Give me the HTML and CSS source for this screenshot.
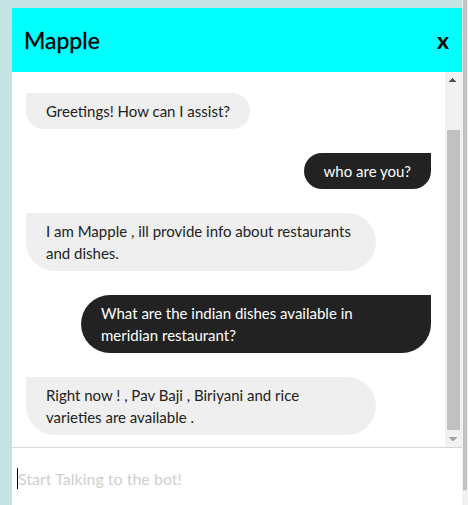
FILE: index.html
```html
<!DOCTYPE html>
<html lang="en">
<head>
<meta charset="utf-8">
<title>Mapple</title>
<link rel="stylesheet" href="styles.css">
</head>
<body>
<div class="page">
  <div class="stage">
    <section class="chat">
      <header class="chat-header">
        <h1 class="chat-title">Mapple</h1>
        <button class="chat-close" type="button">x</button>
      </header>
      <div class="messages">
        <div class="viewport">
          <div class="thread">
            <div class="bubble bot">Greetings! How can I assist?</div>
            <div class="bubble user">who are you?</div>
            <div class="bubble bot">I am Mapple , ill provide info about restaurants and dishes.</div>
            <div class="bubble user">What are the indian dishes available in meridian restaurant?</div>
            <div class="bubble bot">Right now ! , Pav Baji , Biriyani and rice varieties are available .</div>
          </div>
        </div>
        <div class="scrollbar">
          <div class="sb-btn sb-up"></div>
          <div class="sb-track"><div class="sb-thumb"></div></div>
          <div class="sb-btn sb-down"></div>
        </div>
      </div>
      <div class="composer">
        <span class="caret"></span>
        <input class="composer-input" type="text" placeholder="Start Talking to the bot!">
      </div>
    </section>
  </div>
  <div class="page-scroll"><div class="page-thumb"></div><div class="page-arrow"></div></div>
</div>
</body>
</html>
```
FILE: styles.css
```css
html, body {
  margin: 0;
  padding: 0;
}
body {
  background: #c4e3e3;
  font-family: Lato, "Noto Sans", sans-serif;
}
.page {
  display: flex;
  height: 505px;
  overflow: hidden;
}
.stage {
  flex: 1;
  padding: 8px 0 0 12px;
  min-width: 0;
}
.chat {
  background: #ffffff;
  display: flex;
  flex-direction: column;
  height: 504px;
}
.chat-header {
  height: 64px;
  flex: none;
  background: #00ffff;
  display: flex;
  align-items: center;
  justify-content: space-between;
  padding: 0 13px 0 12px;
}
.chat-title {
  margin: 0;
  font-size: 23px;
  font-weight: 400;
  color: #000;
  -webkit-text-stroke: 0.3px #000;
}
.chat-close {
  border: 0;
  background: transparent;
  font-family: Lato, "Noto Sans", sans-serif;
  font-size: 23px;
  font-weight: 700;
  color: #000;
  padding: 0;
  line-height: 1;
}
.messages {
  height: 375px;
  flex: none;
  display: flex;
  border-bottom: 1px solid #d6d6d6;
}
.viewport {
  flex: 1;
  min-width: 0;
  overflow: hidden;
  display: flex;
  flex-direction: column;
  justify-content: flex-end;
}
.thread {
  display: flex;
  flex-direction: column;
  gap: 24px;
  padding: 0 14px 12px 14px;
}
.bubble {
  max-width: 350px;
  box-sizing: border-box;
  padding: 7px 20px;
  font-size: 15px;
  line-height: 22px;
}
.bot {
  align-self: flex-start;
  background: #efefef;
  color: #222;
  border-radius: 0 30px 30px 30px;
}
.user {
  align-self: flex-end;
  background: #222222;
  color: #fff;
  border-radius: 30px 0 30px 30px;
}
.scrollbar {
  width: 17px;
  flex: none;
  background: #f1f1f1;
  display: flex;
  flex-direction: column;
}
.sb-btn {
  height: 17px;
  flex: none;
  background-repeat: no-repeat;
  background-size: 4px 4px;
}
.sb-up {
  background-image:
    linear-gradient(to bottom right, transparent 50%, #505050 50%),
    linear-gradient(to bottom left, transparent 50%, #505050 50%);
  background-position: 4px 6px, 8px 6px;
}
.sb-down {
  background-image:
    linear-gradient(to top right, transparent 50%, #a3a3a3 50%),
    linear-gradient(to top left, transparent 50%, #a3a3a3 50%);
  background-position: 4px 7px, 8px 7px;
}
.sb-track {
  flex: 1;
  display: flex;
  flex-direction: column;
  justify-content: flex-end;
  padding: 0 2px;
}
.sb-thumb {
  height: 300px;
  background: #c1c1c1;
}
.composer {
  flex: 1;
  display: flex;
  align-items: center;
  padding-left: 5px;
  padding-bottom: 4px;
}
.caret {
  width: 1px;
  height: 21px;
  background: #000;
  flex: none;
}
.composer-input {
  flex: 1;
  border: 0;
  outline: none;
  padding: 0;
  font-family: Lato, "Noto Sans", sans-serif;
  font-size: 16px;
  color: #222;
  background: #fff;
}
.composer-input::placeholder {
  color: #cfcfcf;
}
.page-scroll {
  width: 6px;
  flex: none;
  background: #f1f1f1;
  display: flex;
  flex-direction: column;
}
.page-thumb {
  margin-left: 1px;
  width: 4px;
  height: 490px;
  background: #c1c1c1;
}
.page-arrow {
  flex: 1;
}
```
